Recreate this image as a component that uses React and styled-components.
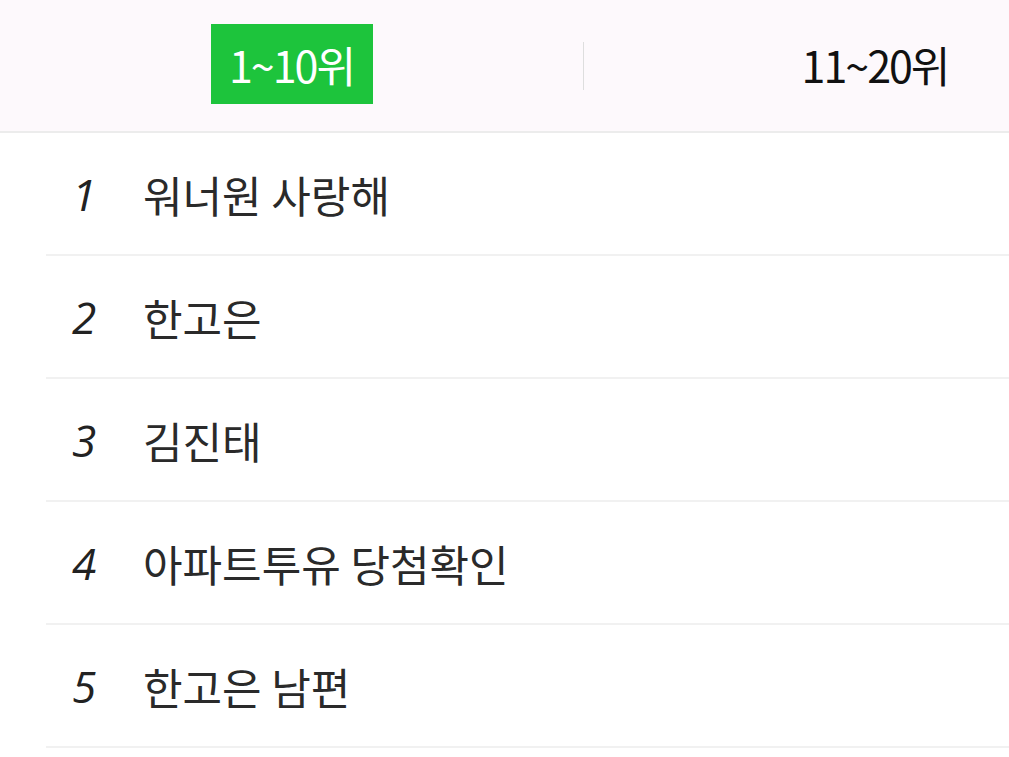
import React from "react";
import styled, { createGlobalStyle } from "styled-components";

const GlobalStyle = createGlobalStyle`
  html, body {
    margin: 0;
    padding: 0;
    background: #ffffff;
    font-family: "Noto Sans CJK KR", "Noto Sans", sans-serif;
    overflow: hidden;
  }
`;

const PageWrapper = styled.div`
  width: 1009px;
  height: 757px;
  overflow: hidden;
`;

const TabBar = styled.div`
  display: grid;
  grid-template-columns: 583px 1px 582px;
  align-items: center;
  width: 1166px;
  height: 131px;
  background: #fdf9fc;
  border-bottom: 2px solid #ececec;
`;

const TabCell = styled.div`
  display: flex;
  justify-content: center;
  align-items: center;
`;

const TabButton = styled.div`
  display: flex;
  justify-content: center;
  align-items: center;
  width: 162px;
  height: 80px;
  margin-top: -3px;
  font-size: 43px;
  letter-spacing: -2px;
  color: ${(p) => (p.active ? "#ffffff" : "#111111")};
  background: ${(p) => (p.active ? "#1dc43c" : "transparent")};
`;

const TabDivider = styled.div`
  width: 1px;
  height: 48px;
  background: #dedede;
`;

const RankList = styled.ul`
  list-style: none;
  margin: 0;
  padding: 0 0 0 46px;
`;

const RankRow = styled.li`
  display: flex;
  align-items: center;
  height: 121px;
  border-bottom: 2px solid #f1f1f1;
`;

const RankNum = styled.span`
  width: 97px;
  padding-left: 26px;
  box-sizing: border-box;
  font-family: "Open Sans", "Noto Sans", sans-serif;
  font-style: italic;
  font-size: 44px;
  color: #222222;
`;

const RankText = styled.span`
  font-size: 43px;
  color: #2a2a2a;
`;

const ranks = [
  "워너원 사랑해",
  "한고은",
  "김진태",
  "아파트투유 당첨확인",
  "한고은 남편",
];

export default function App() {
  return (
    <PageWrapper>
      <GlobalStyle />
      <TabBar>
        <TabCell>
          <TabButton active>1~10위</TabButton>
        </TabCell>
        <TabDivider />
        <TabCell>
          <TabButton>11~20위</TabButton>
        </TabCell>
      </TabBar>
      <RankList>
        {ranks.map((r, i) => (
          <RankRow key={r}>
            <RankNum>{i + 1}</RankNum>
            <RankText>{r}</RankText>
          </RankRow>
        ))}
      </RankList>
    </PageWrapper>
  );
}
